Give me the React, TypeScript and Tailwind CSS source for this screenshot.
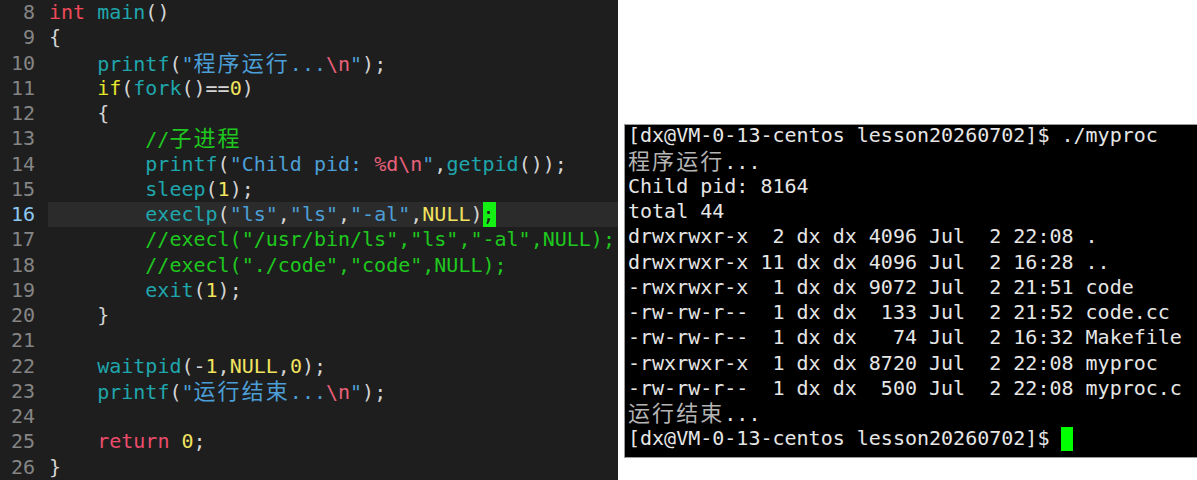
import React from "react";

type Tok = [string, string?];

const mono = "font-['DejaVu_Sans_Mono','Noto_Sans_CJK_SC',monospace]";

const c = {
  kw: "text-[#ee4a5a]",
  fn: "text-[#1fa6ad]",
  str: "text-[#4c9fd6]",
  esc: "text-[#e8607a]",
  num: "text-[#f2e35e]",
  ctl: "text-[#e6e62a]",
  cm: "text-[#1ec81e]",
  p: "text-[#d4d4d4]",
};

const code: { n: number; toks: Tok[]; active?: boolean }[] = [
  { n: 8, toks: [["int", c.kw], [" "], ["main", c.fn], ["()", c.p]] },
  { n: 9, toks: [["{", c.p]] },
  {
    n: 10,
    toks: [["    "], ["printf", c.fn], ["(", c.p], ['"', c.str], ["程序运行", c.str + " cjk"], ["...", c.str], ["\\n", c.esc], ['"', c.str], [");", c.p]],
  },
  { n: 11, toks: [["    "], ["if", c.ctl], ["(", c.p], ["fork", c.fn], ["()==", c.p], ["0", c.num], [")", c.p]] },
  { n: 12, toks: [["    {", c.p]] },
  { n: 13, toks: [["        //", c.cm], ["子进程", c.cm + " cjk"]] },
  {
    n: 14,
    toks: [["        "], ["printf", c.fn], ["(", c.p], ['"Child pid: ', c.str], ["%d\\n", c.esc], ['"', c.str], [",", c.p], ["getpid", c.fn], ["());", c.p]],
  },
  { n: 15, toks: [["        "], ["sleep", c.fn], ["(", c.p], ["1", c.num], [");", c.p]] },
  {
    n: 16,
    active: true,
    toks: [["        "], ["execlp", c.fn], ["(", c.p], ['"ls"', c.str], [",", c.p], ['"ls"', c.str], [",", c.p], ['"-al"', c.str], [",", c.p], ["NULL", c.num], [")", c.p]],
  },
  { n: 17, toks: [['        //execl("/usr/bin/ls","ls","-al",NULL);', c.cm]] },
  { n: 18, toks: [['        //execl("./code","code",NULL);', c.cm]] },
  { n: 19, toks: [["        "], ["exit", c.fn], ["(", c.p], ["1", c.num], [");", c.p]] },
  { n: 20, toks: [["    }", c.p]] },
  { n: 21, toks: [] },
  {
    n: 22,
    toks: [["    "], ["waitpid", c.fn], ["(-", c.p], ["1", c.num], [",", c.p], ["NULL", c.num], [",", c.p], ["0", c.num], [");", c.p]],
  },
  {
    n: 23,
    toks: [["    "], ["printf", c.fn], ["(", c.p], ['"', c.str], ["运行结束", c.str + " cjk"], ["...", c.str], ["\\n", c.esc], ['"', c.str], [");", c.p]],
  },
  { n: 24, toks: [] },
  { n: 25, toks: [["    "], ["return", "text-[#ec4c6c]"], [" "], ["0", c.num], [";", c.p]] },
  { n: 26, toks: [["}", c.p]] },
];

const term: Tok[][] = [
  [["[dx@VM-0-13-centos lesson20260702]$ ./myproc"]],
  [["程序运行", "cjk"], ["..."]],
  [["Child pid: 8164"]],
  [["total 44"]],
  [["drwxrwxr-x  2 dx dx 4096 Jul  2 22:08 ."]],
  [["drwxrwxr-x 11 dx dx 4096 Jul  2 16:28 .."]],
  [["-rwxrwxr-x  1 dx dx 9072 Jul  2 21:51 code"]],
  [["-rw-rw-r--  1 dx dx  133 Jul  2 21:52 code.cc"]],
  [["-rw-rw-r--  1 dx dx   74 Jul  2 16:32 Makefile"]],
  [["-rwxrwxr-x  1 dx dx 8720 Jul  2 22:08 myproc"]],
  [["-rw-rw-r--  1 dx dx  500 Jul  2 22:08 myproc.c"]],
  [["运行结束", "cjk"], ["..."]],
  [["[dx@VM-0-13-centos lesson20260702]$ "]],
];

// CJK glyphs take two cells (2 x 12.04px) in both panes
const cjk = "text-[22px] tracking-[2.08px]";

function Span({ t }: { t: Tok }) {
  const cls = t[1] || "";
  if (cls.includes("cjk")) {
    return <span className={cls.replace("cjk", "") + " " + cjk}>{t[0]}</span>;
  }
  return <span className={cls}>{t[0]}</span>;
}

export default function App() {
  return (
    <div className={`flex w-[1197px] h-[480px] bg-white overflow-hidden text-[20px] leading-[25.25px] ${mono}`}>
      {/* editor */}
      <div className="w-[618px] h-full bg-[#1e1e1e] flex flex-col whitespace-pre">
        {code.map((l) => (
          <div key={l.n} className="flex h-[25.25px]">
            <div className={`w-[48px] shrink-0 text-right pr-[13px] ${l.active ? "text-[#8fc8f0]" : "text-[#858585]"}`}>
              {l.n}
            </div>
            <div className={`flex-1 pl-[1px] ${l.active ? "bg-[#2b2b2b]" : ""}`}>
              {l.toks.map((t, i) => (
                <Span key={i} t={t} />
              ))}
              {l.active && <span className="bg-[#14f014] text-[#1e1e1e] inline-block w-[13px] h-[25px] align-top">;</span>}
            </div>
          </div>
        ))}
      </div>

      {/* terminal */}
      <div className="flex-1 ml-[6px] mt-[124px] h-[334px] bg-black border-t border-l border-b border-[#9a9a9a] whitespace-pre text-[#e6e6e6]">
        <div className="-mt-[1.6px] pl-[3px]">
          {term.map((l, i) => (
            <div key={i} className="h-[25.25px]">
              {l.map((t, j) =>
                t[1] === "cjk" ? (
                  <span key={j} className={`text-[#b4b4b4] ${cjk}`}>
                    {t[0]}
                  </span>
                ) : (
                  <span key={j}>{t[0]}</span>
                )
              )}
              {i === term.length - 1 && <span className="inline-block w-[12px] h-[24px] align-top mt-[1px] bg-[#00ff00]" />}
            </div>
          ))}
        </div>
      </div>
    </div>
  );
}
